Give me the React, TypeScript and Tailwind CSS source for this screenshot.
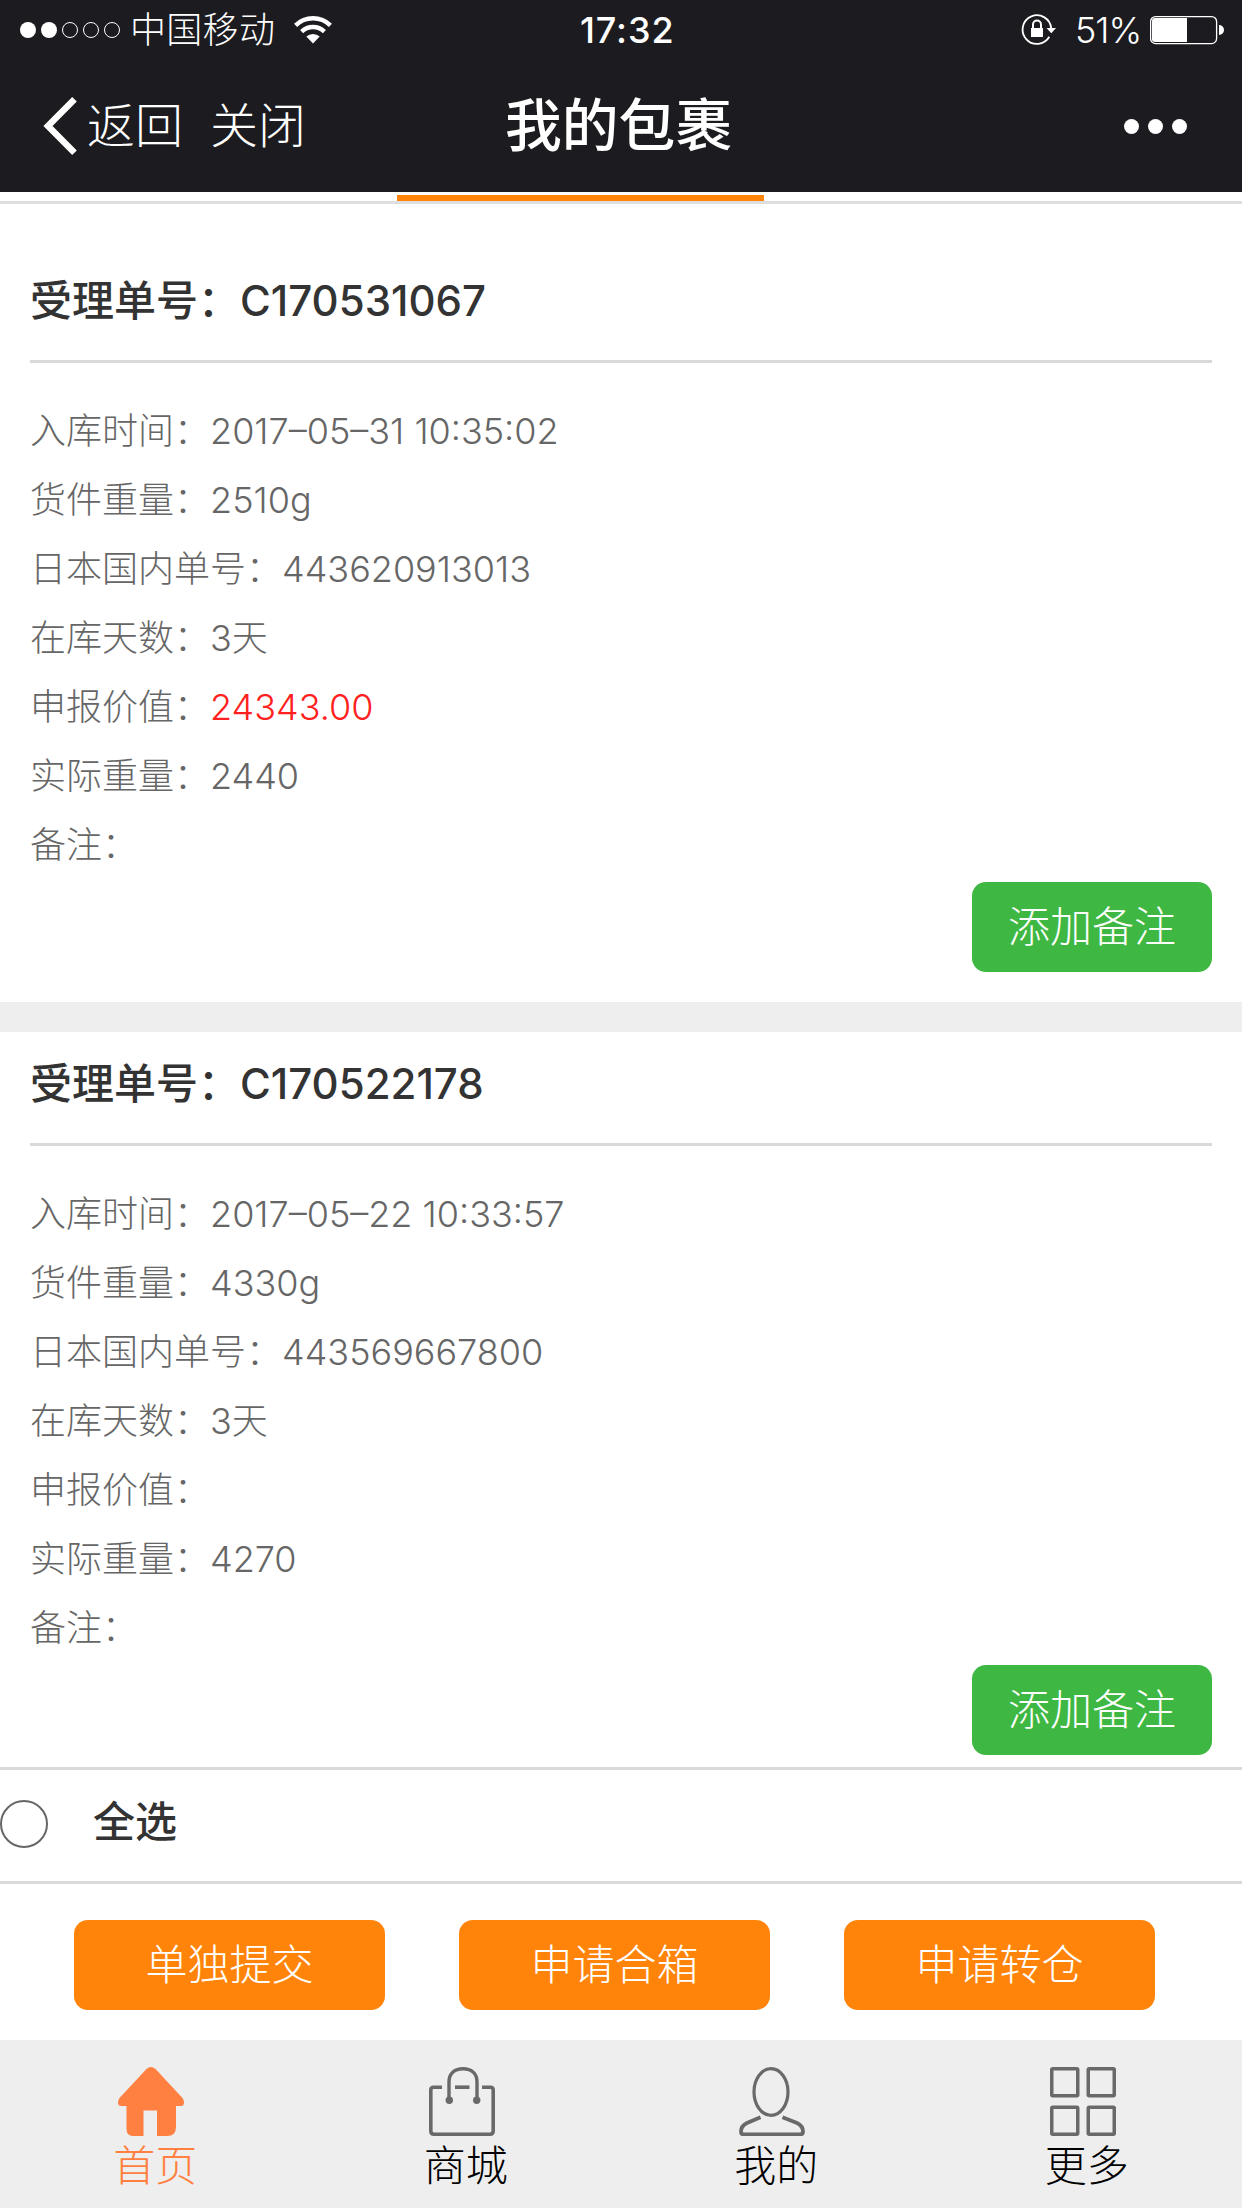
import React from "react";

type Field = { label: string; value?: string; tone?: string; tracking?: string };
type Parcel = { id: string; fields: Field[] };

const parcels: Parcel[] = [
  {
    id: "C170531067",
    fields: [
      { label: "入库时间", value: "2017–05–31 10:35:02" },
      { label: "货件重量", value: "2510g" },
      { label: "日本国内单号", value: "443620913013" },
      { label: "在库天数", value: "3天" },
      { label: "申报价值", value: "24343.00", tone: "text-[#ff2020]" },
      { label: "实际重量", value: "2440" },
      { label: "备注" },
    ],
  },
  {
    id: "C170522178",
    fields: [
      { label: "入库时间", value: "2017–05–22 10:33:57" },
      { label: "货件重量", value: "4330g" },
      { label: "日本国内单号", value: "443569667800" },
      { label: "在库天数", value: "3天" },
      { label: "申报价值" },
      { label: "实际重量", value: "4270" },
      { label: "备注" },
    ],
  },
];

function StatusBar() {
  return (
    <div className="flex h-[60px] items-center">
      <div className="flex w-[580px] items-center pl-5">
        <div className="flex gap-[5px]">
          {[true, true, false, false, false].map((on, i) => (
            <span
              key={i}
              className={on ? "h-4 w-4 rounded-full bg-white" : "h-4 w-4 rounded-full border border-white"}
            />
          ))}
        </div>
        <span className="ml-[10px] text-[36px] leading-[60px] tracking-[0.3px]">中国移动</span>
        <svg className="ml-[19px]" width="38" height="28" viewBox="0 0 38 28" fill="none" stroke="#fff" strokeWidth="4.4">
          <path d="M1.6 9.3A25 25 0 0 1 36.4 9.3" />
          <path d="M7.6 15.6A16.4 16.4 0 0 1 30.4 15.6" />
          <path d="M12.3 20.6A9.6 9.6 0 0 1 25.7 20.6L19 27.4Z" fill="#fff" stroke="none" />
        </svg>
      </div>
      <span className="w-[440px] text-[36px] font-medium leading-[60px] tracking-[0.9px]">17:32</span>
      <svg width="38" height="32" viewBox="0 0 38 32" fill="none" stroke="#fff">
        <path d="M29.3 22.8A14.3 14.3 0 1 1 31.2 14.5" strokeWidth="1.8" />
        <path d="M26.5 14H36L31.3 19.2Z" fill="#fff" stroke="none" />
        <rect x="11" y="14" width="12" height="9" fill="#fff" stroke="none" />
        <path d="M13 15V10.5A4 4 0 0 1 21 10.5V15" strokeWidth="2" />
      </svg>
      <span className="ml-[17px] w-[75px] whitespace-nowrap text-[36px] leading-[60px] tracking-[-1px]">51%</span>
      <svg width="74" height="30" viewBox="0 0 74 30" fill="none">
        <rect x="0.6" y="1.6" width="66" height="27" rx="5" stroke="#fff" strokeWidth="1.3" />
        <path d="M5 3H37V27H5A3 3 0 0 1 2 24V6A3 3 0 0 1 5 3Z" fill="#fff" />
        <path d="M69 10A5 5 0 0 1 69 20Z" fill="#fff" />
      </svg>
    </div>
  );
}

function NavBar() {
  return (
    <div className="flex h-[132px] items-center pl-[43px] text-[48px] leading-[132px]">
      <svg width="34" height="58" viewBox="0 0 34 58" fill="none" stroke="#fff" strokeWidth="6.5">
        <path d="M31.5 2.3L5 29L31.5 55.7" />
      </svg>
      <span className="ml-[10px]">返回</span>
      <span className="ml-[27px]">关闭</span>
      <h1 className="ml-[199px] w-[619px] text-[56.8px] font-medium">我的包裹</h1>
      <div className="flex gap-[9px]">
        <span className="h-[15px] w-[15px] rounded-full bg-white" />
        <span className="h-[15px] w-[15px] rounded-full bg-white" />
        <span className="h-[15px] w-[15px] rounded-full bg-white" />
      </div>
    </div>
  );
}

function ParcelCard({ parcel }: { parcel: Parcel }) {
  return (
    <article className="px-[30px]">
      <h2 className="h-[114px] border-b-[3px] border-[#d9d9d9] text-[42px] font-medium leading-[103px] text-[#333]">
        受理单号：<span className="tracking-[0px]">{parcel.id}</span>
      </h2>
      <dl className="pt-[34px] text-[36px] leading-[69px] text-[#666]">
        {parcel.fields.map((f) => (
          <div key={f.label} className="flex h-[69px] whitespace-nowrap">
            <dt>{f.label}：</dt>
            <dd className={f.tone}>{f.value}</dd>
          </div>
        ))}
      </dl>
      <div className="flex justify-end pt-[2px]">
        <button className="h-[90px] w-[240px] rounded-[14px] bg-[#3eb843] text-[42px] leading-[90px] text-white">
          添加备注
        </button>
      </div>
    </article>
  );
}

const iconClass = "ml-[118px] block";

function HomeIcon() {
  return (
    <svg className={iconClass} width="66" height="69" viewBox="0 0 66 69" fill="#ff8040">
      <path d="M28.5 2Q33 -2 37.500 2L64.500 31Q66 33 66 35.500Q66 39 62.500 39H58V60Q58 69 49 69H39V43.500H25.500V69H15Q8.500 69 8.500 62V39H3.500Q0 39 0 35.500Q0 33 1.500 31Z" />
    </svg>
  );
}

function BagIcon() {
  return (
    <svg className={iconClass} width="66" height="69" viewBox="0 0 66 69" fill="none" stroke="#696969" strokeWidth="3.600">
      <path d="M13 20.200H4.500Q1.800 20.200 1.800 23V64Q1.800 67.200 5 67.200H61Q64.200 67.200 64.200 64V23Q64.200 20.200 61.500 20.200H53" />
      <path d="M26 20.200H40.500" />
      <path d="M20 33V15C20 6 26 1.700 34 1.700S48 6 48 15V33" strokeWidth="3.400" />
      <circle cx="20.300" cy="33.300" r="3.700" fill="#696969" stroke="none" />
      <circle cx="47.700" cy="33.300" r="3.700" fill="#696969" stroke="none" />
    </svg>
  );
}

function PersonIcon() {
  return (
    <svg className={iconClass} width="66" height="69" viewBox="0 0 66 69" fill="none" stroke="#696969" strokeWidth="3.200">
      <ellipse cx="32" cy="25" rx="17" ry="23.300" />
      <path d="M21.500 50.300L8 56Q2 59 2 64.500Q2 67.400 5 67.400H61Q64 67.400 64 64.500Q64 59 58 56L43.500 50.300" strokeWidth="3.800" />
    </svg>
  );
}

function GridIcon() {
  return (
    <svg className={iconClass} width="66" height="69" viewBox="0 0 66 69" fill="none" stroke="#696969" strokeWidth="3.500">
      <rect x="1.750" y="1.750" width="26" height="27" rx="1" />
      <rect x="38.250" y="1.750" width="26" height="27" rx="1" />
      <rect x="1.750" y="40.250" width="26" height="27" rx="1" />
      <rect x="38.250" y="40.250" width="26" height="27" rx="1" />
    </svg>
  );
}

const tabs = [
  { label: "首页", Icon: HomeIcon, color: "text-[#ff8040]" },
  { label: "商城", Icon: BagIcon, color: "text-black" },
  { label: "我的", Icon: PersonIcon, color: "text-black" },
  { label: "更多", Icon: GridIcon, color: "text-black" },
];

export default function App() {
  return (
    <div className="flex h-[2208px] w-[1242px] flex-col overflow-hidden bg-white font-['Inter','Noto_Sans_CJK_SC',sans-serif] font-light">
      <header className="h-[192px] shrink-0 bg-[#1c1b20] text-white">
        <StatusBar />
        <NavBar />
      </header>
      <div className="h-[12px] shrink-0 border-b-[3px] border-[#dedede] pt-[3px]">
        <div className="ml-[397px] h-[6px] w-[367px] bg-[#ff8409]" />
      </div>
      <main className="h-[1563px] shrink-0 overflow-hidden pt-[45px]">
        <ParcelCard parcel={parcels[0]} />
        <div className="mt-[30px] h-[30px] bg-[#eee]" />
        <ParcelCard parcel={parcels[1]} />
      </main>
      <label className="flex h-[117px] shrink-0 items-center border-y-[3px] border-[#d9d9d9] text-[42px] font-medium text-[#333]">
        <span className="mt-[-3px] h-12 w-12 rounded-full border-[2.500px] border-[#666]" />
        <span className="ml-[45px] mt-[-8px]">全选</span>
      </label>
      <div className="flex h-[156px] shrink-0 gap-[74px] pl-[74px] pt-9 text-[42px] leading-[90px] text-white">
        <button className="h-[90px] w-[311px] rounded-[14px] bg-[#ff8409]">单独提交</button>
        <button className="h-[90px] w-[311px] rounded-[14px] bg-[#ff8409]">申请合箱</button>
        <button className="h-[90px] w-[311px] rounded-[14px] bg-[#ff8409]">申请转仓</button>
      </div>
      <nav className="grid h-[168px] shrink-0 grid-cols-4 bg-[#eee] pt-[27px]">
        {tabs.map(({ label, Icon, color }) => (
          <div key={label} className={color}>
            <Icon />
            <div className="text-center text-[42px] leading-[60px]">{label}</div>
          </div>
        ))}
      </nav>
    </div>
  );
}
